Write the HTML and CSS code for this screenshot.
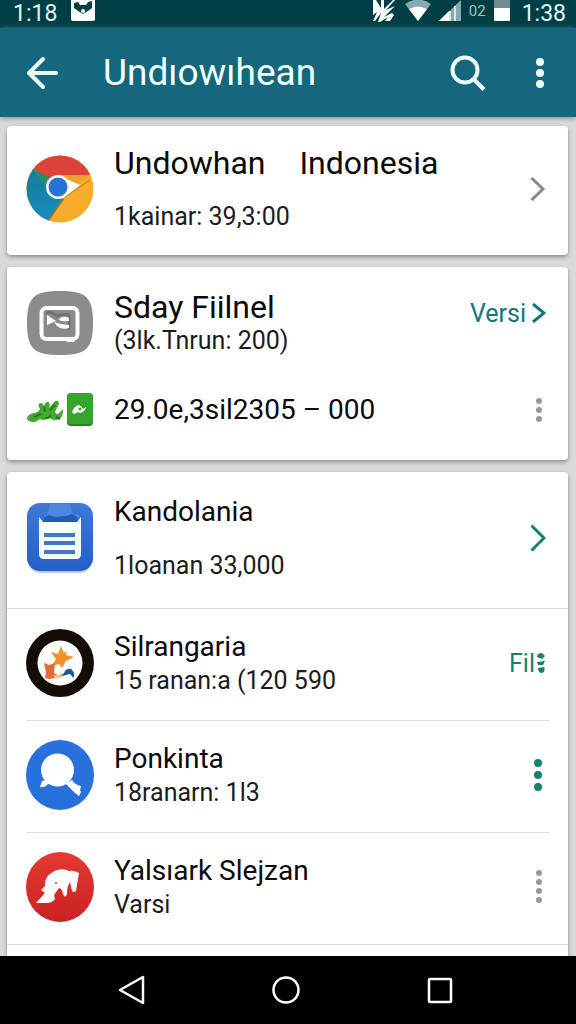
FILE: index.html
```
<!DOCTYPE html>
<html lang="id">
<head>
	<meta charset="utf-8">
	<meta name="viewport" content="width=device-width, initial-scale=1">
	<title>Undıowıhean</title>
	<link rel="stylesheet" href="styles.css">
</head>
<body>
	<div class="status">
		<span class="clock">1:18</span>
		<svg class="notif" width="24" height="22" viewBox="0 0 24 22"><path d="M0 0h24v19q0 2-2 2H2q-2 0-2-2z" fill="#fff"/><path d="M3 3l4-1 2 3h6l2-3 4-1v7l-4 3-5 3-5-3-4-3z" fill="#083f47"/><circle cx="12" cy="11" r="2" fill="#fff"/></svg>
		<div class="tray">
			<svg width="26" height="24" viewBox="0 0 26 24"><path d="M2 0h3l5 8V0h3v9L22 0h2l-9 10 9-4-11 11 8-4 2 2-4 6h-5l3-4-8 5h-2l3-9-6 8H2l4-9-4 3z" fill="#fff"/></svg>
			<svg width="26" height="22" viewBox="0 0 26 22"><path d="M0 4Q13-5 26 4L13 21z" fill="#86a9ad"/><path d="M4 9q9-5 18 0l-9 12z" fill="#fff"/></svg>
			<svg width="22" height="22" viewBox="0 0 22 22"><path d="M22 0v21H0z" fill="#86a9ad"/><path d="M10 11v10H0z" fill="#fff"/><path d="M11 11v10M16 6v15" stroke="#dce8e8" stroke-width="2"/></svg>
			<span class="net">02</span>
			<svg width="16" height="22" viewBox="0 0 16 22"><path d="M0 0h16v21H0z" fill="#708d94"/><path d="M0 8h16v13H0z" fill="#fff"/></svg>
			<span class="clock">1:38</span>
		</div>
	</div>

	<header class="appbar">
		<button class="icon-btn" aria-label="Back">
			<svg width="32" height="34" viewBox="0 0 32 34" fill="none" stroke="#f0ffff" stroke-width="4" stroke-linecap="round" stroke-linejoin="round"><path d="M17 3L3 17l14 14M4 17h26" /></svg>
		</button>
		<h1>Undıowıhean</h1>
		<button class="icon-btn" aria-label="Search">
			<svg width="36" height="36" viewBox="0 0 36 36" fill="none" stroke="#f0ffff" stroke-width="4"><circle cx="15" cy="15" r="12.500"/><path d="M23.500 24L34 34.500"/></svg>
		</button>
		<button class="icon-btn" aria-label="More">
			<svg width="8" height="30" viewBox="0 0 8 30" fill="#f0ffff"><circle cx="4" cy="4" r="4"/><circle cx="4" cy="15" r="4"/><circle cx="4" cy="26" r="4"/></svg>
		</button>
	</header>

	<main class="list">
		<section class="card">
			<div class="row roomy first">
				<svg class="app" viewBox="0 0 68 68">
					<defs>
						<clipPath id="disc"><circle cx="34" cy="34" r="33.500"/></clipPath>
						<linearGradient id="teal" x2="0" y2="1"><stop stop-color="#157c96"/><stop offset="1" stop-color="#148cc0"/></linearGradient>
					</defs>
					<g clip-path="url(#disc)">
						<path d="M0 0h68v68H0z" fill="#f6ac2b"/>
						<path d="M0 0h68v20H30l-5 8L8 14z" fill="#dc4237"/>
						<path d="M8 14L0 12v56h20l18-24-14-8z" fill="url(#teal)"/>
						<path d="M8 15l15 20 5-11z" fill="#278d66"/>
						<path d="M37 44L22 66" stroke="#9b7339" stroke-width="2"/>
						<path d="M33 20h31L34 43z" fill="#f2a02c"/>
						<path d="M36 22l18 8-16 13z" fill="#fff"/>
						<path d="M64 25L36 44" stroke="#bd812b" stroke-width="1"/>
					</g>
					<circle cx="32" cy="32" r="12" fill="#fff"/>
					<circle cx="32" cy="32" r="9.500" fill="#2673d6"/>
				</svg>
				<div class="text">
					<h2><span>Undowhan</span> <span>Indonesia</span></h2>
					<p>1kainar: 39,3:00</p>
				</div>
				<button class="action" aria-label="Open">
					<svg width="16" height="24" viewBox="0 0 16 24"><path d="M1.500 1L13 12 1.500 23"/></svg>
				</button>
			</div>
		</section>

		<section class="card padded">
			<div class="row big">
				<svg class="app" viewBox="0 0 68 68">
					<path d="M34 2C60 2 67 8 67 34S60 66 34 66 1 60 1 34 8 2 34 2z" fill="#8c8c8c"/>
					<rect x="15.500" y="19" width="36" height="31" rx="5" fill="#8a8a8a" stroke="#fff" stroke-width="4"/>
					<path d="M40 49h10l-2 4h-7z" fill="#fff"/>
					<path d="M20 24q6-2 11 3 7-3 12-1v15" fill="none" stroke="#6f6f6f" stroke-width="2.500"/>
					<path d="M21 26l9 6-9 4z" fill="#fff"/>
					<path d="M33 30q5-4 10-1v3q-6 1-10-1z" fill="#fff"/>
					<path d="M28 33q7 3 15 3v3q-8 2-12-2z" fill="#fff"/>
				</svg>
				<div class="text">
					<h2>Sday Fiilnel</h2>
					<p>(3lk.Tnrun: 200)</p>
				</div>
				<button class="action teal top">Versi
					<svg width="14" height="20" viewBox="0 0 14 20"><path d="M1 1l11 9-11 9"/></svg>
				</button>
			</div>
			<div class="row slim">
				<svg class="app short" viewBox="0 0 68 36">
					<path d="M1 26q1-4 7-5 5-1 6-4-3-5 0-6 3 0 4 3 1-4 4-4 3 1 1 6l6-7q4-1 4 3l-4 8q2 4 5 0l3-3q1 10-7 11-4 1-7-3-5 5-9 2-4 4-8 3-5-1-5-4z" fill="#45a82f"/>
					<path d="M8 25l7-3M18 15l1 5M24 18l5-5M19 26q4 1 6-3M30 25l4 2" stroke="#237c20" stroke-width="2" fill="none"/>
					<rect x="41" y="1" width="26" height="33" rx="4" fill="#258420"/>
					<rect x="41" y="1" width="26" height="31" rx="4" fill="#37a52d"/>
					<path d="M46 20q2-6 7-7 3 1 4 4l3-2q-1 5-6 6l-2-1-4 2z" fill="#fff"/>
					<circle cx="54" cy="17" r="1.500" fill="#37a52d"/>
				</svg>
				<div class="text">
					<h2>29.0e,3sil2305 – 000</h2>
				</div>
				<button class="action dots" aria-label="More">
					<svg width="6" height="24" viewBox="0 0 6 24"><circle cx="3" cy="3" r="3"/><circle cx="3" cy="12" r="3"/><circle cx="3" cy="21" r="3"/></svg>
				</button>
			</div>
		</section>

		<section class="card">
			<div class="row roomy">
				<svg class="app" viewBox="0 0 68 70">
					<defs><linearGradient id="blue" x2="0" y2="1"><stop stop-color="#3d79d8"/><stop offset="1" stop-color="#235fc7"/></linearGradient></defs>
					<rect x="2" y="4" width="64" height="66" rx="13" fill="#bdccdf"/>
					<rect x="1" y="0" width="66" height="68" rx="13" fill="url(#blue)"/>
					<path d="M24 1h20l3 11h6v6H18v-6h3z" fill="#4d88e2"/>
					<path d="M18 14l5-2 6 2 11-1 6-2 5 3 2 5H17z" fill="#2459b4"/>
					<path d="M13 14l4 5h34l4-5v37q0 5-5 5H18q-5 0-5-5z" fill="#f5ffff"/>
					<path d="M18 32h31M18 40h31M18 49h31" stroke="#4277c4" stroke-width="4"/>
				</svg>
				<div class="text">
					<h2>Kandolania</h2>
					<p>1loanan 33,000</p>
				</div>
				<button class="action green" aria-label="Open">
					<svg width="16" height="28" viewBox="0 0 16 28"><path d="M1.500 1.500L14 14 1.500 26.500"/></svg>
				</button>
			</div>
			<div class="row ruled">
				<svg class="app" viewBox="0 0 68 68">
					<circle cx="34" cy="34" r="34" fill="#140d07"/>
					<circle cx="34" cy="34" r="22.500" fill="#fff"/>
					<path d="M35 17l3 7 3-2-1 4 8 2-8 4-4 7-3-4-7 2 4-7-5-7 7 2z" fill="#ee922b"/>
					<path d="M18 34l5 2 6-2-1 10 7 4-12 2-4-1 1-6z" fill="#e36c36"/>
					<path d="M28 46q5 1 8-3l1 5-8 2z" fill="#f4c6a0"/>
					<path d="M35 47l3-3q2-5 7-4 5 4 2 9-3-6-6-3z" fill="#1f5897"/>
				</svg>
				<div class="text">
					<h2>Silrangaria</h2>
					<p>15 ranan:a (120 590</p>
				</div>
				<button class="action green fil">Fil
					<svg class="dots" width="8" height="20" viewBox="0 0 8 20"><path d="M0 4q0-4 5-4l3 3-3 3zM0 9l8-1-2 4H1zM1 15l6-1q2 4-2 6-4 0-4-5z"/></svg>
				</button>
			</div>
			<div class="row ruled">
				<svg class="app" viewBox="0 0 68 70">
					<ellipse cx="34" cy="35" rx="34" ry="35" fill="#2870dc"/>
					<circle cx="31.500" cy="30" r="16.500" fill="#fff"/>
					<path d="M16 41q5-2 8 1l-4 4q-4 2-6 1z" fill="#fff"/>
					<path d="M40 44l6-4q3 5 9 6l-1 4 1 2-2 4-4-3z" fill="#fff"/>
				</svg>
				<div class="text">
					<h2>Ponkinta</h2>
					<p>18ranarn: 1l3</p>
				</div>
				<button class="action green dots" aria-label="More">
					<svg width="8" height="32" viewBox="0 0 8 32"><circle cx="4" cy="4" r="4"/><circle cx="4" cy="16" r="4"/><circle cx="4" cy="28" r="4"/></svg>
				</button>
			</div>
			<div class="row ruled">
				<svg class="app" viewBox="0 0 68 70">
					<defs><linearGradient id="red" x2="0" y2="1"><stop stop-color="#e53a32"/><stop offset="1" stop-color="#c92124"/></linearGradient></defs>
					<ellipse cx="34" cy="35" rx="34" ry="35" fill="url(#red)"/>
					<path d="M10 51l9-10-4-3 4-4q-1-11 12-16 6-2 12 1 5-1 10 2-2 12-3 18-2 2-4 0l-2-9q-3 4-3 12-2 5-4 0-1-6-4-6l-5 7 1 4q-3 4-8 4z" fill="#fff"/>
					<circle cx="30" cy="31" r="1" fill="#cb3a35"/>
				</svg>
				<div class="text">
					<h2>Yalsıark Slejzan</h2>
					<p>Varsi</p>
				</div>
				<button class="action dots" aria-label="More">
					<svg width="6" height="34" viewBox="0 0 6 34"><circle cx="3" cy="3" r="3"/><circle cx="3" cy="12" r="3"/><circle cx="3" cy="21" r="3"/><circle cx="3" cy="30" r="3"/></svg>
				</button>
			</div>
			<div class="row next"></div>
		</section>
	</main>

	<nav class="navbar">
		<button aria-label="Back"><svg width="28" height="30" viewBox="0 0 28 30"><path d="M25 2v26L2 15z"/></svg></button>
		<button aria-label="Home"><svg width="28" height="30" viewBox="0 0 28 30"><circle cx="14" cy="15" r="12.500"/></svg></button>
		<button aria-label="Recents"><svg width="28" height="30" viewBox="0 0 28 30"><rect x="3" y="4" width="22" height="23" rx="1"/></svg></button>
	</nav>
</body>
</html>
```

FILE: styles.css
```
* {
	box-sizing: border-box;
}

body {
	margin: 0;
	height: 100vh;
	display: flex;
	flex-direction: column;
	background: #d9dadc;
	color: #0a0a0a;
	font-family: Roboto, "Noto Sans", sans-serif;
}

h1, h2, p {
	margin: 0;
	font-weight: 400;
	white-space: nowrap;
}

svg {
	display: block;
	flex: none;
}

button {
	display: flex;
	align-items: center;
	justify-content: center;
	margin: 0;
	padding: 0;
	border: 0;
	background: none;
	color: inherit;
	font: inherit;
	cursor: pointer;
}

/* status bar */
.status {
	flex: none;
	display: flex;
	align-items: flex-start;
	height: 28px;
	padding: 0 10px 0 13px;
	background: #003e46;
	color: #e4f4f4;
}
.clock {
	font-size: 23px;
	line-height: 27px;
}
.notif {
	margin-left: 14px;
}
.tray {
	display: flex;
	align-items: flex-start;
	gap: 8px;
	margin-left: auto;
}
.tray .clock {
	margin-left: 4px;
}
.net {
	font-size: 15px;
	line-height: 22px;
	color: #a5c1c3;
}

/* app bar */
.appbar {
	flex: none;
	display: flex;
	align-items: center;
	height: 89px;
	padding: 0 32px 0 26px;
	background: #14677c;
	color: #f0ffff;
	box-shadow: 0 1px 5px #6f898f;
}
.appbar h1 {
	flex: 1;
	margin-left: 45px;
	font-size: 37px;
}
.icon-btn + .icon-btn {
	margin-left: 50px;
}

/* cards */
.list {
	flex: 1;
	min-height: 0;
	overflow: hidden;
	display: flex;
	flex-direction: column;
	gap: 12px;
	padding: 9px 8px 0 7px;
}
.card {
	flex: none;
	border-radius: 4px;
	background: #fff;
	box-shadow: 0 2px 4px #8c8c8e;
}
.padded {
	padding-bottom: 19px;
}

.row {
	display: flex;
	align-items: center;
	gap: 20px;
	height: 112px;
	margin: 0 18px 0 19px;
}
.row.roomy {
	height: 136px;
	padding-bottom: 4px;
}
.row.first {
	height: 129px;
}
.row.slim {
	height: 62px;
}
.row.next {
	height: 60px;
}
.ruled {
	padding-bottom: 3px;
}
.ruled + .ruled {
	border-top: 1px solid #dfdfe1;
}
.roomy + .ruled,
.row.next {
	margin: 0;
	padding: 0 18px 3px 19px;
	border-top: 1px solid #dcdcde;
}

.app {
	width: 68px;
	height: 70px;
}
.app.short {
	height: 36px;
}

.text {
	flex: 1;
	min-width: 0;
}
.text h2 {
	font-size: 28px;
	line-height: 36px;
}
.first h2,
.big h2 {
	font-size: 32px;
}
.first h2 span + span {
	margin-left: 26px;
}
.text p {
	font-size: 25px;
	line-height: 32px;
	color: #1c1c1c;
}
.roomy p {
	margin-top: 20px;
}

/* right hand controls */
.action {
	gap: 6px;
	margin-right: 4px;
	color: #888;
	font-size: 25px;
}
.action svg {
	fill: none;
	stroke: currentColor;
	stroke-width: 3;
}
.action.dots svg,
.action svg.dots {
	fill: currentColor;
	stroke: none;
}
.action.dots {
	margin-right: 8px;
	color: #999;
}
.action.teal {
	color: #12777b;
}
.action.green {
	color: #13836e;
}
.action.fil {
	gap: 2px;
	margin-right: 5px;
}
.action.top {
	align-self: flex-start;
	height: 92px;
}

/* navigation bar */
.navbar {
	flex: none;
	display: flex;
	justify-content: space-between;
	height: 68px;
	padding: 0 122px 0 118px;
	background: #000;
}
.navbar svg {
	fill: none;
	stroke: #fff;
	stroke-width: 2.5;
	stroke-linejoin: round;
}
```
